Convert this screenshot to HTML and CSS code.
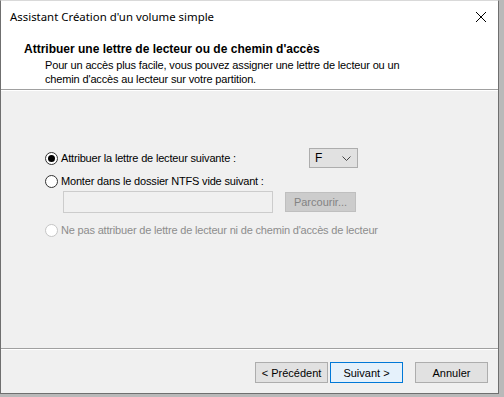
FILE: index.html
```html
<!DOCTYPE html>
<html lang="fr">
<head>
    <meta charset="UTF-8">
    <title>Assistant Création d'un volume simple</title>
    <link rel="stylesheet" href="styles.css">
</head>
<body>
    <div class="window">
        <div class="titlebar">
            <span class="title">Assistant Création d'un volume simple</span>
            <svg class="close" width="12" height="12" viewBox="0 0 12 12">
                <path d="M1 1 L11 11 M11 1 L1 11" stroke="#000" stroke-width="1"/>
            </svg>
        </div>
        <div class="header">
            <div class="header-title">Attribuer une lettre de lecteur ou de chemin d'accès</div>
            <div class="header-desc">Pour un accès plus facile, vous pouvez assigner une lettre de lecteur ou un<br>chemin d'accès au lecteur sur votre partition.</div>
        </div>
        <div class="content">
            <div class="row">
                <label class="option first">
                    <span class="radio checked"></span>
                    Attribuer la lettre de lecteur suivante :
                </label>
                <div class="combo">
                    <span>F</span>
                    <svg width="9" height="5" viewBox="0 0 9 5">
                        <path d="M0.5 0.5 L4.5 4.5 L8.5 0.5" fill="none" stroke="#444" stroke-width="1"/>
                    </svg>
                </div>
            </div>
            <label class="option second">
                <span class="radio"></span>
                Monter dans le dossier NTFS vide suivant :
            </label>
            <div class="path-row">
                <div class="textbox"></div>
                <button class="btn disabled">Parcourir...</button>
            </div>
            <label class="option disabled-text">
                <span class="radio off"></span>
                Ne pas attribuer de lettre de lecteur ni de chemin d'accès de lecteur
            </label>
        </div>
        <div class="footer">
            <button class="btn">&lt; Précédent</button>
            <button class="btn default">Suivant &gt;</button>
            <button class="btn cancel">Annuler</button>
        </div>
    </div>
</body>
</html>
```

FILE: styles.css
```css
body {
    margin: 0;
    background: #b9b9b9;
    font-family: 'Liberation Sans', Arial, sans-serif;
    font-size: 11px;
    color: #000;
}
.window {
    width: 497px;
    height: 392px;
    background: #f0f0f0;
    border: 1px solid #6f6f6f;
    border-top-color: #d9d9d9;
    display: flex;
    flex-direction: column;
}
.titlebar {
    height: 30px;
    background: #fff;
    display: flex;
    align-items: center;
    justify-content: space-between;
    padding: 0 11px 0 9px;
}
.title {
    font-family: 'Noto Sans', sans-serif;
    font-size: 11.4px;
    color: #000;
}
.close {
    margin-top: 2px;
}
.header {
    background: #fff;
    border-bottom: 1px solid #a0a0a0;
    padding: 11px 0 0 23px;
    box-sizing: border-box;
    height: 59px;
}
.header-title {
    font-weight: bold;
    font-size: 12px;
    line-height: 15px;
}
.header-desc {
    padding-left: 21px;
    line-height: 14px;
    margin-top: 1px;
    letter-spacing: -0.15px;
}
.content {
    flex: 1;
    border-top: 1px solid #fff;
    padding: 57px 0 0 44px;
}
.row {
    display: flex;
    align-items: center;
}
.option {
    display: flex;
    align-items: center;
    height: 16px;
    letter-spacing: -0.18px;
}
.option.first {
    width: 264px;
    height: 20px;
}
.option.second {
    margin-top: 5px;
}
.radio {
    width: 11px;
    height: 11px;
    border: 1px solid #333;
    border-radius: 50%;
    background: #fff;
    margin-right: 3px;
    position: relative;
    flex: none;
}
.radio.checked::after {
    content: '';
    position: absolute;
    left: 2px;
    top: 2px;
    width: 7px;
    height: 7px;
    border-radius: 50%;
    background: #000;
}
.radio.off {
    border-color: #c5c5c5;
}
.combo {
    width: 49px;
    height: 20px;
    border: 1px solid #adadad;
    background: #e1e1e1;
    display: flex;
    align-items: center;
    justify-content: space-between;
    padding: 0 6px 0 5px;
    box-sizing: border-box;
    font-size: 12px;
}
.path-row {
    display: flex;
    align-items: center;
    gap: 12px;
    padding-left: 18px;
    margin: 2px 0 9px;
}
.textbox {
    width: 208px;
    height: 20px;
    border: 1px solid #cccccc;
    background: #f0f0f0;
}
.btn {
    font-family: 'Liberation Sans', Arial, sans-serif;
    font-size: 11px;
    height: 21px;
    width: 73px;
    border: 1px solid #adadad;
    background: #e1e1e1;
    color: #000;
    padding: 0;
}
.btn.disabled {
    width: 71px;
    height: 20px;
    border-color: #bfbfbf;
    background: #cccccc;
    color: #838383;
}
.disabled-text {
    color: #8d8d8d;
}
.footer {
    height: 45px;
    border-top: 1px solid #a0a0a0;
    box-shadow: inset 0 1px 0 #fff;
    display: flex;
    align-items: flex-start;
    padding: 13px 0 0 254px;
    box-sizing: border-box;
    gap: 2px;
}
.btn.default {
    border-color: #0078d7;
    background: #e5f1fb;
}
.btn.cancel {
    margin-left: 10px;
}
```
